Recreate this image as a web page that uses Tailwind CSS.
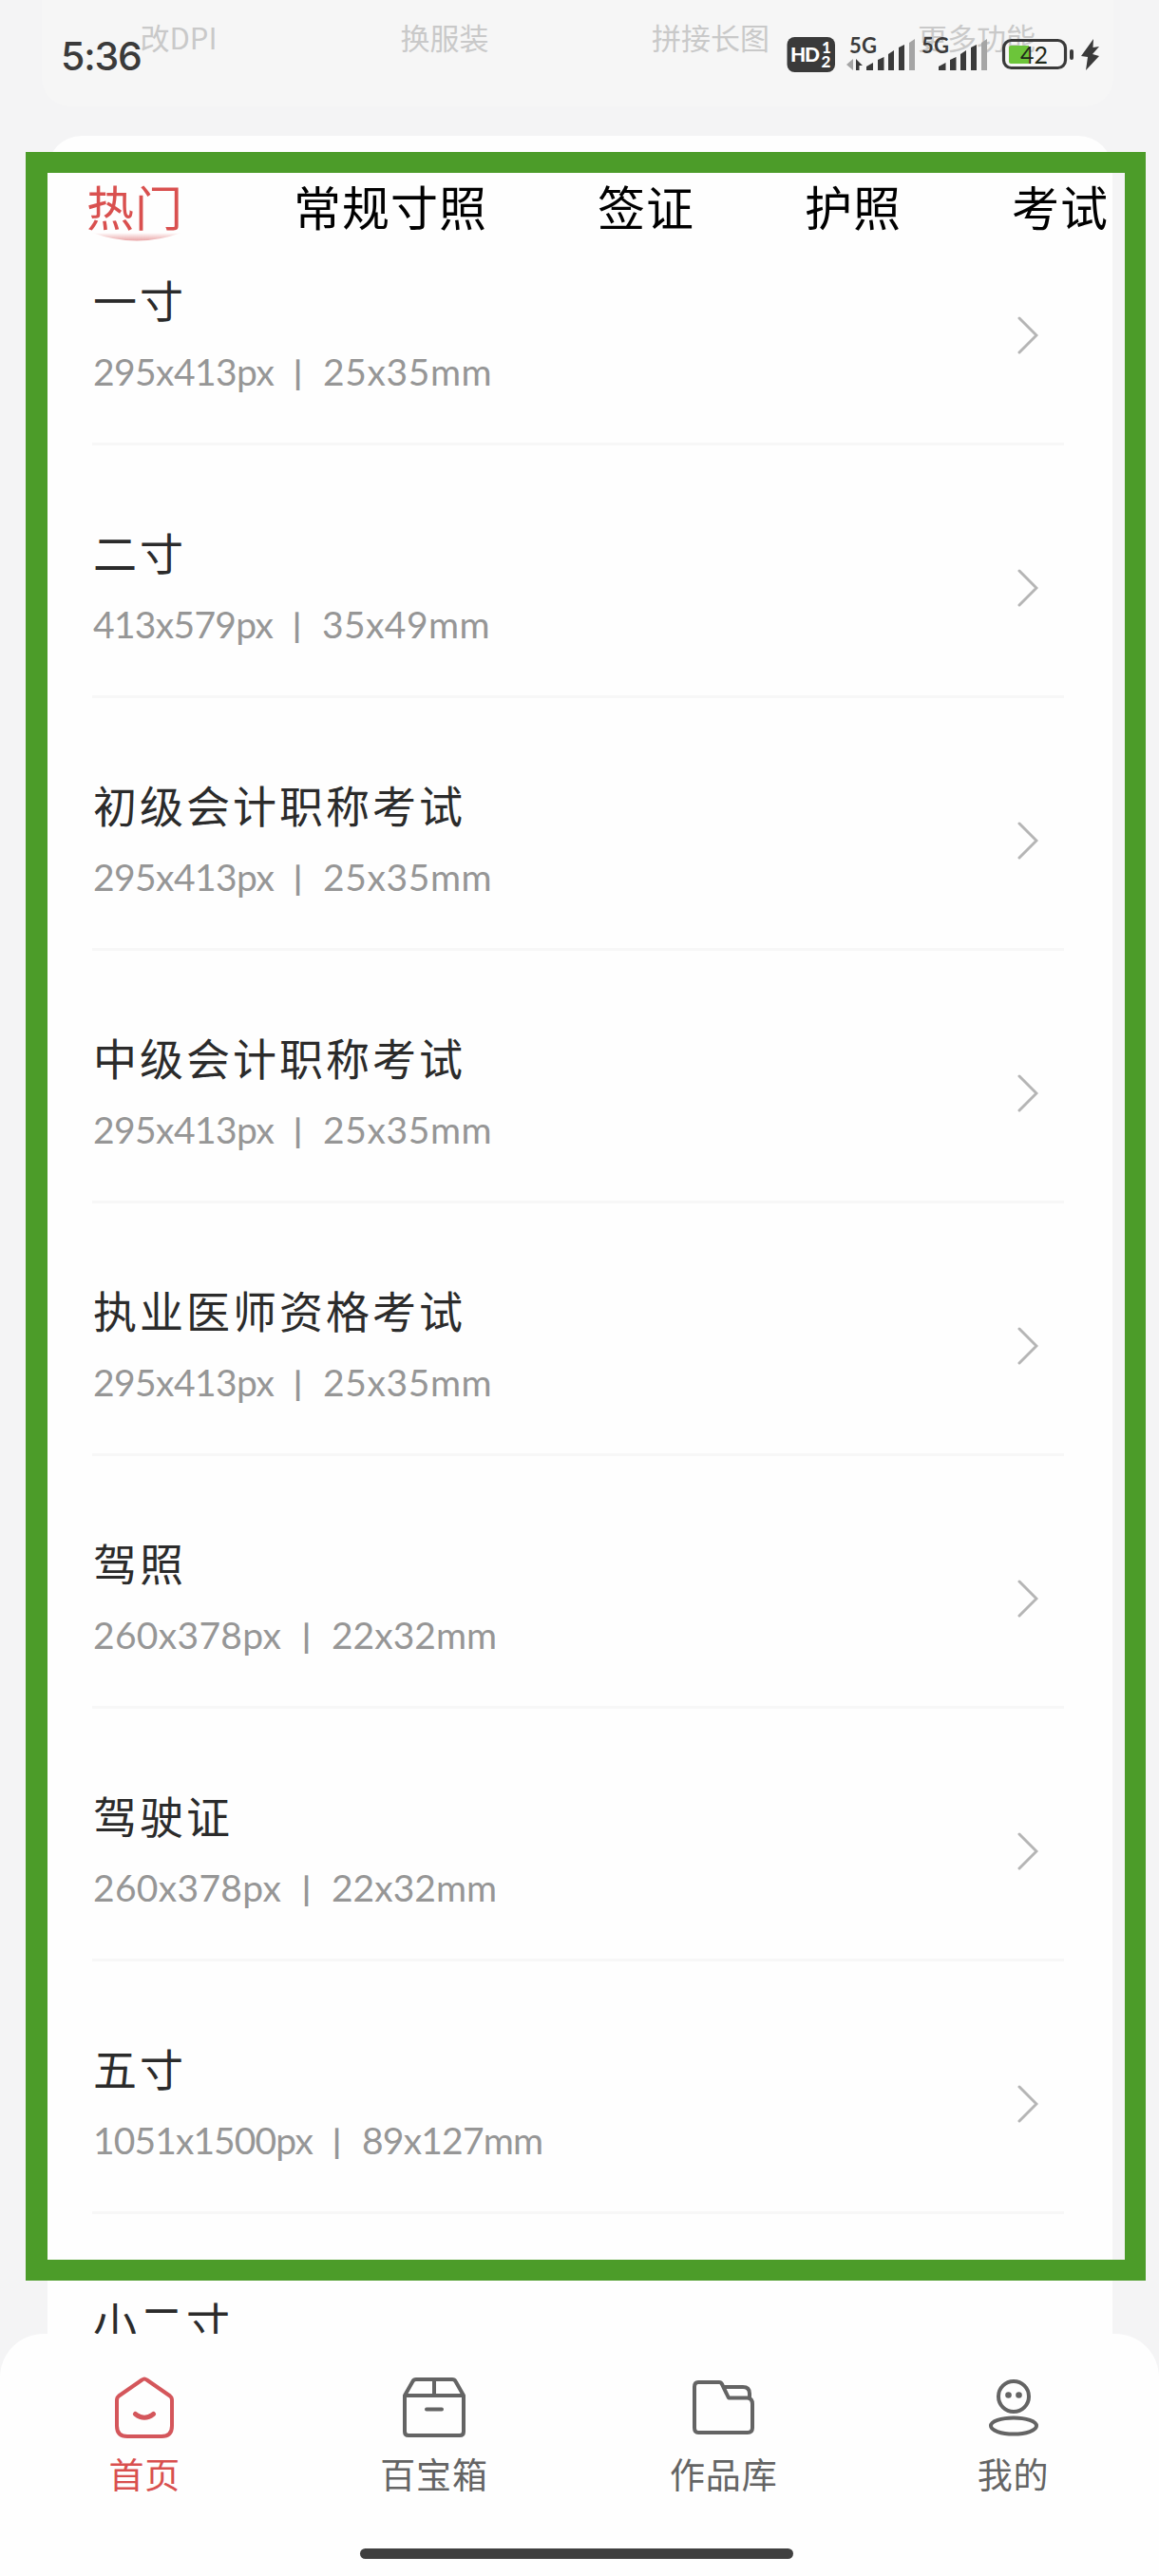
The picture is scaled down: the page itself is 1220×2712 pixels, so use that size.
<!DOCTYPE html>
<html lang="zh-CN">
  <head>
    <meta charset="UTF-8" />
    <meta name="viewport" content="width=device-width, initial-scale=1.0" />
    <title>证件照</title>
    <script src="https://cdn.jsdelivr.net/npm/@tailwindcss/browser@4"></script>
  </head>
  <body class="bg-[#f4f4f5] font-['Lato','Noto_Sans_CJK_SC',sans-serif]">
    <div class="relative w-[1220px] h-[2712px] overflow-hidden">
      <!-- Tools card, scrolled under the status bar -->
      <section class="ml-[44px] mr-[48px] h-[112px] rounded-b-[30px] bg-[#f6f6f6] px-1 pt-[15px] grid grid-cols-4 text-center text-[31px] leading-[48px] text-[#c9c9c9] font-['Noto_Sans_CJK_SC',sans-serif]">
        <span>改DPI</span>
        <span>换服装</span>
        <span>拼接长图</span>
        <span>更多功能</span>
      </section>

      <!-- Size list -->
      <main class="ml-[50px] mr-[49px] mt-[31px] h-[2400px] rounded-t-[36px] bg-[#fefefe]">
        <nav class="h-[124px] pt-[35px] pl-[41px] flex gap-[116px] overflow-hidden whitespace-nowrap text-[50px] tracking-[1px] leading-[76px] text-black font-['Noto_Sans_CJK_SC',sans-serif]">
          <a class="relative text-[#d9504f]">
            热门
            <svg class="absolute left-[6px] top-[67px]" width="94" height="10" viewBox="0 0 94 10">
              <defs>
                <linearGradient id="smile" x1="0" y1="0" x2="0" y2="1">
                  <stop offset="0" stop-color="#fff" />
                  <stop offset="1" stop-color="#e9a3a4" />
                </linearGradient>
              </defs>
              <path d="M0 0 Q47 17 94 0 Z" fill="url(#smile)" />
            </svg>
          </a>
          <a>常规寸照</a>
          <a>签证</a>
          <a>护照</a>
          <a>考试</a>
        </nav>

        <ul class="ml-[47px] mr-[51px] flex flex-col gap-[64px]">
          <li class="h-[202px] pb-[28px] flex items-center justify-between border-b-3 border-[#f7f7f7]">
            <div class="pl-px">
              <h3 class="text-[46px] tracking-[3px] leading-[76px] text-[#2b2b2b] font-['Noto_Sans_CJK_SC',sans-serif]">一寸</h3>
              <p class="flex text-[39px] leading-[78px] text-[#969696]"><span class="w-[211px] tracking-[-0.6px]">295x413px</span><span class="w-[31px] text-[35px] font-bold">|</span><span class="tracking-[0.6px]">25x35mm</span></p>
            </div>
            <svg class="mr-[27px]" width="22" height="40" viewBox="0 0 22 40" fill="none" stroke="#b5b5b5" stroke-width="3" stroke-linecap="round"><path d="M2 2 L20 20 L2 38" /></svg>
          </li>
          <li class="h-[202px] pb-[28px] flex items-center justify-between border-b-3 border-[#f7f7f7]">
            <div class="pl-px">
              <h3 class="text-[46px] tracking-[3px] leading-[76px] text-[#2b2b2b] font-['Noto_Sans_CJK_SC',sans-serif]">二寸</h3>
              <p class="flex text-[39px] leading-[78px] text-[#969696]"><span class="w-[210px] tracking-[-0.7px]">413x579px</span><span class="w-[31px] text-[35px] font-bold">|</span><span class="tracking-[0.4px]">35x49mm</span></p>
            </div>
            <svg class="mr-[27px]" width="22" height="40" viewBox="0 0 22 40" fill="none" stroke="#b5b5b5" stroke-width="3" stroke-linecap="round"><path d="M2 2 L20 20 L2 38" /></svg>
          </li>
          <li class="h-[202px] pb-[28px] flex items-center justify-between border-b-3 border-[#f7f7f7]">
            <div class="pl-px">
              <h3 class="text-[46px] tracking-[3px] leading-[76px] text-[#2b2b2b] font-['Noto_Sans_CJK_SC',sans-serif]">初级会计职称考试</h3>
              <p class="flex text-[39px] leading-[78px] text-[#969696]"><span class="w-[211px] tracking-[-0.6px]">295x413px</span><span class="w-[31px] text-[35px] font-bold">|</span><span class="tracking-[0.6px]">25x35mm</span></p>
            </div>
            <svg class="mr-[27px]" width="22" height="40" viewBox="0 0 22 40" fill="none" stroke="#b5b5b5" stroke-width="3" stroke-linecap="round"><path d="M2 2 L20 20 L2 38" /></svg>
          </li>
          <li class="h-[202px] pb-[28px] flex items-center justify-between border-b-3 border-[#f7f7f7]">
            <div class="pl-px">
              <h3 class="text-[46px] tracking-[3px] leading-[76px] text-[#2b2b2b] font-['Noto_Sans_CJK_SC',sans-serif]">中级会计职称考试</h3>
              <p class="flex text-[39px] leading-[78px] text-[#969696]"><span class="w-[211px] tracking-[-0.6px]">295x413px</span><span class="w-[31px] text-[35px] font-bold">|</span><span class="tracking-[0.6px]">25x35mm</span></p>
            </div>
            <svg class="mr-[27px]" width="22" height="40" viewBox="0 0 22 40" fill="none" stroke="#b5b5b5" stroke-width="3" stroke-linecap="round"><path d="M2 2 L20 20 L2 38" /></svg>
          </li>
          <li class="h-[202px] pb-[28px] flex items-center justify-between border-b-3 border-[#f7f7f7]">
            <div class="pl-px">
              <h3 class="text-[46px] tracking-[3px] leading-[76px] text-[#2b2b2b] font-['Noto_Sans_CJK_SC',sans-serif]">执业医师资格考试</h3>
              <p class="flex text-[39px] leading-[78px] text-[#969696]"><span class="w-[211px] tracking-[-0.6px]">295x413px</span><span class="w-[31px] text-[35px] font-bold">|</span><span class="tracking-[0.6px]">25x35mm</span></p>
            </div>
            <svg class="mr-[27px]" width="22" height="40" viewBox="0 0 22 40" fill="none" stroke="#b5b5b5" stroke-width="3" stroke-linecap="round"><path d="M2 2 L20 20 L2 38" /></svg>
          </li>
          <li class="h-[202px] pb-[28px] flex items-center justify-between border-b-3 border-[#f7f7f7]">
            <div class="pl-px">
              <h3 class="text-[46px] tracking-[3px] leading-[76px] text-[#2b2b2b] font-['Noto_Sans_CJK_SC',sans-serif]">驾照</h3>
              <p class="flex text-[39px] leading-[78px] text-[#969696]"><span class="w-[220px] tracking-[0.3px]">260x378px</span><span class="w-[31px] text-[35px] font-bold">|</span><span>22x32mm</span></p>
            </div>
            <svg class="mr-[27px]" width="22" height="40" viewBox="0 0 22 40" fill="none" stroke="#b5b5b5" stroke-width="3" stroke-linecap="round"><path d="M2 2 L20 20 L2 38" /></svg>
          </li>
          <li class="h-[202px] pb-[28px] flex items-center justify-between border-b-3 border-[#f7f7f7]">
            <div class="pl-px">
              <h3 class="text-[46px] tracking-[3px] leading-[76px] text-[#2b2b2b] font-['Noto_Sans_CJK_SC',sans-serif]">驾驶证</h3>
              <p class="flex text-[39px] leading-[78px] text-[#969696]"><span class="w-[220px] tracking-[0.3px]">260x378px</span><span class="w-[31px] text-[35px] font-bold">|</span><span>22x32mm</span></p>
            </div>
            <svg class="mr-[27px]" width="22" height="40" viewBox="0 0 22 40" fill="none" stroke="#b5b5b5" stroke-width="3" stroke-linecap="round"><path d="M2 2 L20 20 L2 38" /></svg>
          </li>
          <li class="h-[202px] pb-[28px] flex items-center justify-between border-b-3 border-[#f7f7f7]">
            <div class="pl-px">
              <h3 class="text-[46px] tracking-[3px] leading-[76px] text-[#2b2b2b] font-['Noto_Sans_CJK_SC',sans-serif]">五寸</h3>
              <p class="flex text-[39px] leading-[78px] text-[#969696]"><span class="w-[252px] tracking-[-0.9px]">1051x1500px</span><span class="w-[31px] text-[35px] font-bold">|</span><span class="tracking-[-0.8px]">89x127mm</span></p>
            </div>
            <svg class="mr-[27px]" width="22" height="40" viewBox="0 0 22 40" fill="none" stroke="#b5b5b5" stroke-width="3" stroke-linecap="round"><path d="M2 2 L20 20 L2 38" /></svg>
          </li>
          <li class="h-[202px] pl-px pt-[10px]">
            <h3 class="text-[46px] tracking-[3px] leading-[76px] text-[#2b2b2b] font-['Noto_Sans_CJK_SC',sans-serif]">小二寸</h3>
          </li>
        </ul>
      </main>

      <!-- Highlight frame -->
      <div class="absolute left-[27px] top-[160px] w-[1179px] h-[2241px] border-[#4c9c29] border-l-[23px] border-r-[22px] border-y-[22px]"></div>

      <!-- Status bar -->
      <header class="absolute inset-x-0 top-0 h-[116px] pl-[64px] pr-[62px] flex justify-between text-[#3a3a3a]">
        <span class="pt-[33px] text-[41px] leading-[52px] font-medium font-['Inter',sans-serif] tracking-[-1.2px]">5:36</span>
        <svg class="mt-[36px]" width="332" height="42" viewBox="826 36 332 42" font-family="Lato, sans-serif" font-weight="bold" fill="#3a3a3a">
          <rect x="828.5" y="39" width="50.5" height="37" rx="8" />
          <text x="832" y="65" font-size="21" font-weight="900" fill="#fff" textLength="31">HD</text>
          <text x="865" y="56" font-size="17" font-weight="900" fill="#fff">1</text>
          <text x="864.5" y="71" font-size="17" font-weight="900" fill="#fff">2</text>

          <text x="894" y="56" font-size="22" textLength="29">5G</text>
          <path d="M898 62 V74 L891 68 Z" fill="#a5a5a5" />
          <path d="M901 62 L908 69 L904.500 69 V74 H901 Z" />
          <path d="M912 74 V70 L919 66 V74 Z" />
          <path d="M924 74 V63 L930.500 60 V74 Z" />
          <path d="M935 74 V57 L941 53 V74 Z" />
          <path d="M946 74 V50 L952 47 V74 Z" />
          <path d="M957 74 V45 L963 41 V74 Z" fill="#a5a5a5" />

          <text x="970" y="56" font-size="22" textLength="29">5G</text>
          <path d="M988 74 V70 L995.500 66 V74 Z" />
          <path d="M1000 74 V63 L1006.500 60 V74 Z" />
          <path d="M1011 74 V57 L1017 53 V74 Z" />
          <path d="M1022 74 V50 L1028 47 V74 Z" />
          <path d="M1033 74 V45 L1039 41 V74 Z" fill="#a5a5a5" />

          <rect x="1056.500" y="42.500" width="65" height="29" rx="8" fill="none" stroke="#3a3a3a" stroke-width="3.200" />
          <path d="M1064 48 H1083 V67 H1064 Q1062 67 1062 65 V50 Q1062 48 1064 48 Z" fill="#6cc53a" />
          <rect x="1126" y="52" width="4" height="11" rx="2" />
          <text x="1074" y="67" font-size="25" font-weight="normal" fill="#1f2a1a" textLength="29">42</text>
          <path d="M1151 41 L1138 59 L1145 60 L1143 74 L1157 59 L1150 57 L1157 49 L1150.500 50 Z" />
        </svg>
      </header>

      <!-- Bottom navigation -->
      <footer class="absolute inset-x-0 bottom-0 h-[255px] rounded-t-[46px] bg-[#fefefe] text-[#646464]">
        <div class="grid grid-cols-4 pt-[42px] pr-px text-[37px] leading-[54px] tracking-[1px] font-['Noto_Sans_CJK_SC',sans-serif]">
          <a class="flex flex-col items-center gap-[6px] text-[#d9504f]">
            <svg width="72" height="72" viewBox="0 0 72 72" fill="none" stroke="#d4565b" stroke-width="4" stroke-linejoin="round" stroke-linecap="round">
              <path d="M33.500 6.500 Q36 4.500 38.500 6.500 L63 23.500 Q65 25 65 28 V55 Q65 66 54 66 H18 Q7 66 7 55 V28 Q7 25 9 23.500 Z" />
              <path d="M26.500 42.500 Q36 50 45.500 42.500" stroke-width="5" />
            </svg>
            首页
          </a>
          <a class="flex flex-col items-center gap-[6px]">
            <svg width="72" height="72" viewBox="0 0 72 72" fill="none" stroke="#646464" stroke-width="4" stroke-linejoin="round" stroke-linecap="round">
              <path d="M17 6 H55 Q57.500 6 58.500 8 L67 23 V61 Q67 65 63 65 H9 Q5 65 5 61 V23 L13.500 8 Q14.500 6 17 6 Z M5 23 H67 M36 6 V23 M28 37.500 H44" />
            </svg>
            百宝箱
          </a>
          <a class="flex flex-col items-center gap-[6px]">
            <svg width="72" height="72" viewBox="0 0 72 72" fill="none" stroke="#646464" stroke-width="4" stroke-linejoin="round" stroke-linecap="round">
              <path d="M9 9 H31 Q33 9 34 11 L41 25.500 H61 Q66 26 66 32 V57 Q66 62 61 62 H9 Q5 62 5 57 V14 Q5 9 9 9 Z M36 14 H56 Q63 14 63 21 V26" />
            </svg>
            作品库
          </a>
          <a class="flex flex-col items-center gap-[6px]">
            <svg width="72" height="72" viewBox="0 0 72 72" fill="none" stroke="#646464" stroke-width="4">
              <circle cx="36" cy="24" r="16" />
              <ellipse cx="36" cy="55" rx="24" ry="8.500" />
              <circle cx="30.500" cy="22.500" r="3.300" fill="#646464" stroke="none" />
              <circle cx="41.500" cy="22.500" r="3.300" fill="#646464" stroke="none" />
            </svg>
            我的
          </a>
        </div>
        <div class="ml-[379px] mt-[52px] w-[456px] h-[11px] rounded-full bg-[#404040]"></div>
      </footer>
    </div>
  </body>
</html>
